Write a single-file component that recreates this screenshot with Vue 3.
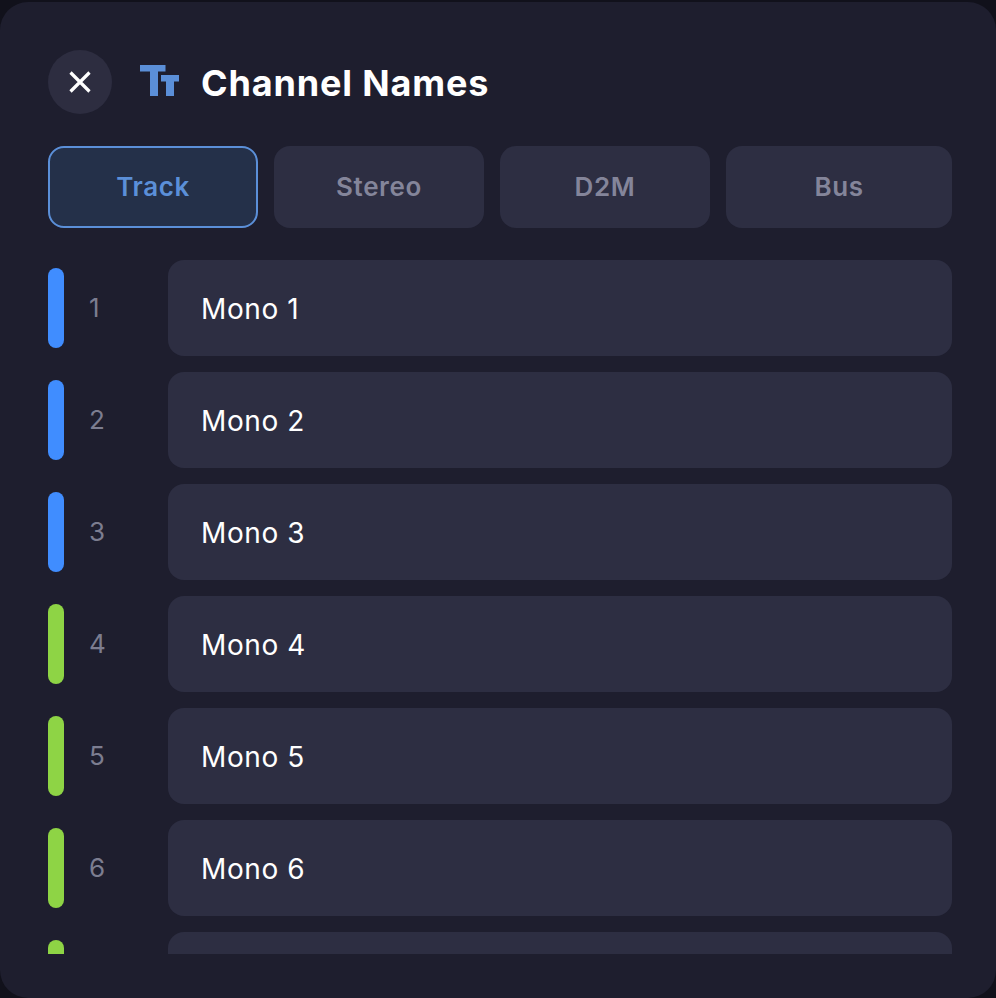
<script setup>
import { ref } from 'vue'

const tabs = ['Track', 'Stereo', 'D2M', 'Bus']
const activeTab = ref('Track')

const channels = [1, 2, 3, 4, 5, 6, 7].map((n) => ({
  id: n,
  name: `Mono ${n}`,
  color: n <= 3 ? '#408dff' : '#8ed445'
}))
</script>

<template>
  <div class="modal">
    <div class="header">
      <button class="close-btn" aria-label="Close">
        <svg width="24" height="24" viewBox="0 0 24 24" fill="none">
          <path d="M2.5 2.5L21.5 21.5M21.5 2.5L2.5 21.5" stroke="#ffffff" stroke-width="3.2" />
        </svg>
      </button>
      <svg class="title-icon" width="40" height="32" viewBox="0 0 40 32">
        <path d="M0 1H25.500V7.500H18V32H10V7.500H0Z" fill="#5b8fd8" />
        <path d="M21 11H39V17.500H34V32H26V17.500H21Z" fill="#5b8fd8" />
      </svg>
      <h1 class="title">Channel Names</h1>
    </div>

    <div class="tabs">
      <button
        v-for="tab in tabs"
        :key="tab"
        class="tab"
        :class="{ active: tab === activeTab }"
        @click="activeTab = tab"
      >
        {{ tab }}
      </button>
    </div>

    <div class="channel-list">
      <div v-for="channel in channels" :key="channel.id" class="channel-row">
        <span class="color-bar" :style="{ background: channel.color }"></span>
        <span class="channel-number">{{ channel.id }}</span>
        <div class="channel-input">{{ channel.name }}</div>
      </div>
    </div>
  </div>
</template>

<style scoped>
.modal {
  box-sizing: border-box;
  height: 996px;
  margin-top: 2px;
  padding: 48px 44px 44px 48px;
  background: #1e1e2e;
  border-radius: 28px;
  font-family: Inter, "Liberation Sans", sans-serif;
  overflow: hidden;
}

.header {
  display: flex;
  align-items: center;
  height: 64px;
  margin-bottom: 32px;
}

.close-btn {
  display: flex;
  align-items: center;
  justify-content: center;
  width: 64px;
  height: 64px;
  padding: 0;
  border: none;
  border-radius: 50%;
  background: #2d2d40;
  cursor: pointer;
}

.title-icon {
  margin-left: 28px;
  margin-top: -4px;
  flex-shrink: 0;
}

.title {
  margin: 1px 0 0 21px;
  font-size: 36px;
  font-weight: 700;
  letter-spacing: 0.85px;
  line-height: 40px;
  color: #ffffff;
}

.tabs {
  display: flex;
  gap: 16px;
  margin-bottom: 32px;
}

.tab {
  box-sizing: border-box;
  flex: 0 0 210px;
  height: 82px;
  padding: 0 0 2px;
  border: 2px solid transparent;
  border-radius: 16px;
  background: #2d2e42;
  color: #84859a;
  font-family: inherit;
  font-size: 26px;
  font-weight: 600;
  letter-spacing: 0.6px;
  cursor: pointer;
}

.tab:last-child {
  flex: 1 1 auto;
}

.tab.active {
  background: #243049;
  border-color: #5b8fd8;
  color: #5b8fd8;
}

.channel-list {
  display: flex;
  flex-direction: column;
  gap: 16px;
  height: 694px;
  overflow: hidden;
}

.channel-row {
  display: flex;
  align-items: center;
  flex-shrink: 0;
  height: 96px;
}

.color-bar {
  width: 16px;
  height: 80px;
  border-radius: 8px;
  flex-shrink: 0;
}

.channel-number {
  width: 104px;
  padding: 0 0 2px 25px;
  box-sizing: border-box;
  font-size: 26px;
  color: #7c7d90;
  flex-shrink: 0;
}

.channel-input {
  flex: 1;
  box-sizing: border-box;
  height: 96px;
  padding-left: 33px;
  border-radius: 16px;
  background: #2d2e42;
  color: #ffffff;
  font-size: 28px;
  font-weight: 400;
  letter-spacing: 0.6px;
  line-height: 99px;
}
</style>

<style>
html,
body {
  margin: 0;
  background: #11111b;
}
</style>
